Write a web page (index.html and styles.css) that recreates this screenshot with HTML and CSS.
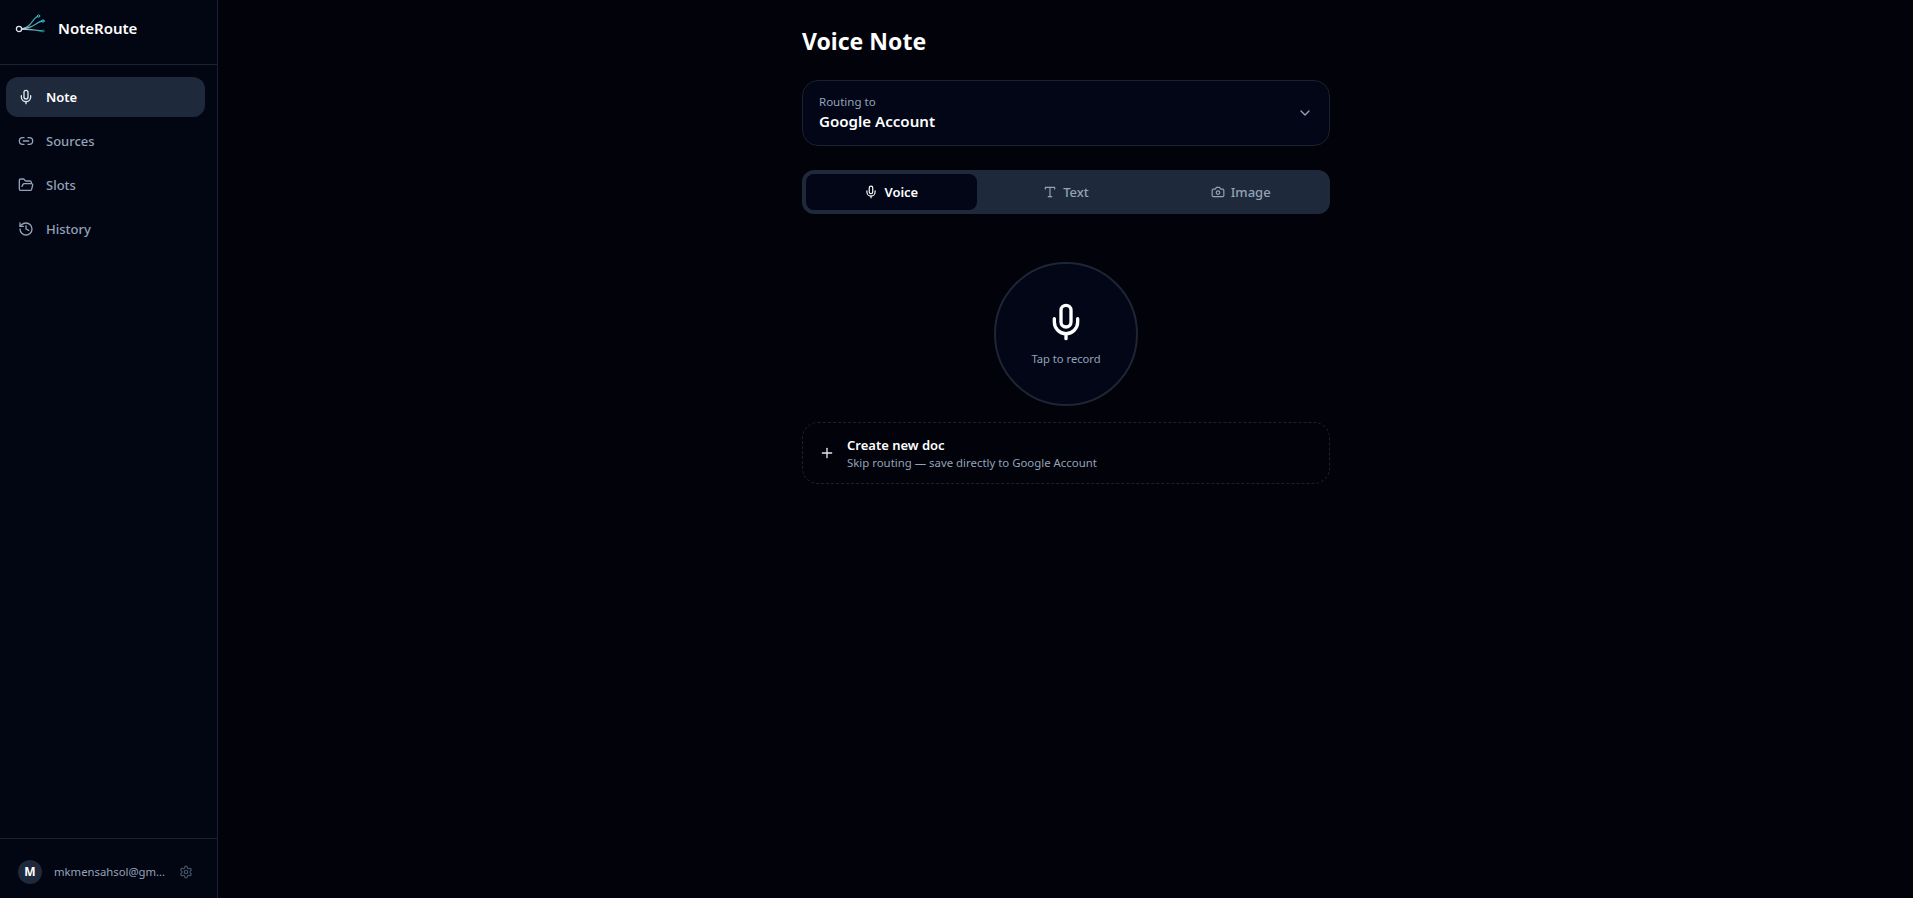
FILE: index.html
```html
<!DOCTYPE html>
<html lang="en">
<head>
<meta charset="utf-8">
<title>NoteRoute</title>
<link rel="stylesheet" href="styles.css">
</head>
<body>
<div class="app">
  <aside class="sidebar">
    <div class="brand">
      <svg class="logo" width="32" height="24" viewBox="0 0 32 24" fill="none">
        <defs>
          <linearGradient id="lg" x1="4" y1="18" x2="28" y2="6" gradientUnits="userSpaceOnUse">
            <stop offset="0" stop-color="#e2e8f0"/>
            <stop offset="0.5" stop-color="#4fa3ab"/>
            <stop offset="1" stop-color="#22c3d6"/>
          </linearGradient>
        </defs>
        <circle cx="4" cy="18" r="2.6" stroke="#e2e8f0" stroke-width="1.3"/>
        <path d="M6.600 18C12 17 15 14 17 11C19 8 20 6.500 22.500 5.500" stroke="url(#lg)" stroke-width="1.300"/>
        <path d="M6.600 18C13 17.500 18 15 21 13C23 11.500 25 10.500 27 10" stroke="url(#lg)" stroke-width="1.300"/>
        <path d="M6.600 18C13 18 20 19 27 20" stroke="url(#lg)" stroke-width="1.300"/>
        <circle class="dot" cx="23.500" cy="5" r="1.200" stroke="#35d0e0"/>
        <circle class="dot" cx="28" cy="10" r="1.200" stroke="#35d0e0"/>
        <circle class="dot" cx="28" cy="20" r="1.100" stroke="#1c7a86"/>
      </svg>
      <span class="brand-name">NoteRoute</span>
    </div>
    <nav class="nav">
      <a class="nav-item active">
        <svg class="ico" viewBox="0 0 24 24"><path d="M12 2a3 3 0 0 0-3 3v7a3 3 0 0 0 6 0V5a3 3 0 0 0-3-3Z"/><path d="M19 10v2a7 7 0 0 1-14 0v-2"/><line x1="12" x2="12" y1="19" y2="22"/></svg>
        <span>Note</span>
      </a>
      <a class="nav-item">
        <svg class="ico" viewBox="0 0 24 24"><path d="M9 17H7A5 5 0 0 1 7 7h2"/><path d="M15 7h2a5 5 0 1 1 0 10h-2"/><line x1="8" x2="16" y1="12" y2="12"/></svg>
        <span>Sources</span>
      </a>
      <a class="nav-item">
        <svg class="ico" viewBox="0 0 24 24"><path d="m6 14 1.500-2.900A2 2 0 0 1 9.240 10H20a2 2 0 0 1 1.940 2.500l-1.540 6a2 2 0 0 1-1.950 1.500H4a2 2 0 0 1-2-2V5a2 2 0 0 1 2-2h3.900a2 2 0 0 1 1.690.900l.810 1.200a2 2 0 0 0 1.670.900H18a2 2 0 0 1 2 2v2"/></svg>
        <span>Slots</span>
      </a>
      <a class="nav-item">
        <svg class="ico" viewBox="0 0 24 24"><path d="M3 12a9 9 0 1 0 9-9 9.750 9.750 0 0 0-6.740 2.740L3 8"/><path d="M3 3v5h5"/><path d="M12 7v5l4 2"/></svg>
        <span>History</span>
      </a>
    </nav>
    <div class="account">
      <div class="avatar">M</div>
      <span class="email">mkmensahsol@gm...</span>
      <svg class="gear" viewBox="0 0 24 24"><path d="M12.220 2h-.440a2 2 0 0 0-2 2v.180a2 2 0 0 1-1 1.730l-.430.250a2 2 0 0 1-2 0l-.150-.080a2 2 0 0 0-2.730.730l-.220.380a2 2 0 0 0 .730 2.730l.150.100a2 2 0 0 1 1 1.720v.510a2 2 0 0 1-1 1.740l-.150.090a2 2 0 0 0-.730 2.730l.220.380a2 2 0 0 0 2.730.730l.150-.080a2 2 0 0 1 2 0l.430.250a2 2 0 0 1 1 1.730V20a2 2 0 0 0 2 2h.440a2 2 0 0 0 2-2v-.180a2 2 0 0 1 1-1.730l.430-.250a2 2 0 0 1 2 0l.150.080a2 2 0 0 0 2.730-.730l.220-.390a2 2 0 0 0-.730-2.730l-.150-.080a2 2 0 0 1-1-1.740v-.500a2 2 0 0 1 1-1.740l.150-.090a2 2 0 0 0 .730-2.730l-.220-.380a2 2 0 0 0-2.730-.730l-.150.080a2 2 0 0 1-2 0l-.430-.250a2 2 0 0 1-1-1.730V4a2 2 0 0 0-2-2z"/><circle cx="12" cy="12" r="3"/></svg>
    </div>
  </aside>
  <main class="main">
    <div class="column">
      <h1 class="title">Voice Note</h1>
      <button class="route">
        <span class="route-text">
          <span class="route-label">Routing to</span>
          <span class="route-value">Google Account</span>
        </span>
        <svg class="chev" viewBox="0 0 24 24"><path d="m6 9 6 6 6-6"/></svg>
      </button>
      <div class="tabs">
        <div class="tab active">
          <svg class="tab-ico" viewBox="0 0 24 24"><path d="M12 2a3 3 0 0 0-3 3v7a3 3 0 0 0 6 0V5a3 3 0 0 0-3-3Z"/><path d="M19 10v2a7 7 0 0 1-14 0v-2"/><line x1="12" x2="12" y1="19" y2="22"/></svg>
          <span>Voice</span>
        </div>
        <div class="tab">
          <svg class="tab-ico" viewBox="0 0 24 24"><polyline points="4 7 4 4 20 4 20 7"/><line x1="9" x2="15" y1="20" y2="20"/><line x1="12" x2="12" y1="4" y2="20"/></svg>
          <span>Text</span>
        </div>
        <div class="tab">
          <svg class="tab-ico" viewBox="0 0 24 24"><path d="M14.500 4h-5L7 7H4a2 2 0 0 0-2 2v9a2 2 0 0 0 2 2h16a2 2 0 0 0 2-2V9a2 2 0 0 0-2-2h-3l-2.500-3z"/><circle cx="12" cy="13" r="3"/></svg>
          <span>Image</span>
        </div>
      </div>
      <div class="record-wrap">
        <button class="record">
          <svg class="record-ico" viewBox="0 0 24 24"><path d="M12 2a3 3 0 0 0-3 3v7a3 3 0 0 0 6 0V5a3 3 0 0 0-3-3Z"/><path d="M19 10v2a7 7 0 0 1-14 0v-2"/><line x1="12" x2="12" y1="19" y2="22"/></svg>
          <span class="record-text">Tap to record</span>
        </button>
      </div>
      <button class="create">
        <svg class="plus" viewBox="0 0 24 24"><path d="M5 12h14"/><path d="M12 5v14"/></svg>
        <span class="create-text">
          <span class="create-title">Create new doc</span>
          <span class="create-sub">Skip routing — save directly to Google Account</span>
        </span>
      </button>
    </div>
  </main>
</div>
</body>
</html>
```
FILE: styles.css
```css
* { box-sizing: border-box; }
html, body { margin: 0; height: 100%; }
body {
  background: #01020a;
  color: #fff;
  font-family: "Noto Sans", "Open Sans", sans-serif;
  overflow: hidden;
}
svg { fill: none; stroke: currentColor; stroke-width: 2; stroke-linecap: round; stroke-linejoin: round; flex: none; }
button { font: inherit; color: inherit; text-align: left; }
.app { display: flex; height: 898px; }
.sidebar {
  width: 218px;
  flex: none;
  display: flex;
  flex-direction: column;
  background: #020512;
  border-right: 1px solid #1a2130;
}
.brand {
  height: 65px;
  display: flex;
  align-items: center;
  gap: 11px;
  padding: 0 16px 9px 15px;
  border-bottom: 1px solid #1a2130;
}
.logo { margin-top: -9px; }
.logo .dot { stroke-width: 0.9; }
.brand-name { font-size: 15px; font-weight: 600; }
.nav { flex: 1; display: flex; flex-direction: column; gap: 4px; padding: 12px 12px 12px 6px; }
.nav-item {
  height: 40px;
  display: flex;
  align-items: center;
  gap: 12px;
  padding: 0 12px;
  border-radius: 12px;
  font-size: 13px;
  font-weight: 500;
  color: #94a3b8;
}
.nav-item .ico { width: 16px; height: 16px; }
.nav-item.active { background: #1e293b; color: #fff; font-weight: 600; }
.nav-item.active .ico { color: #e2e8f0; }
.account {
  height: 60px;
  display: flex;
  align-items: center;
  padding: 6px 18px 0;
  border-top: 1px solid #1a2130;
}
.avatar {
  width: 24px;
  height: 24px;
  border-radius: 50%;
  background: #1e293b;
  display: flex;
  align-items: center;
  justify-content: center;
  font-size: 12px;
  font-weight: 700;
  flex: none;
}
.email { margin-left: 12px; width: 112px; font-size: 11.3px; color: #94a3b8; white-space: nowrap; }
.gear { width: 14px; height: 14px; margin-left: 13px; color: #475569; }
.main { flex: 1; display: flex; justify-content: center; padding-left: 1px; }
.column { width: 528px; padding-top: 25px; display: flex; flex-direction: column; }
.title { margin: 0; font-size: 23px; line-height: 32px; font-weight: 700; }
.route {
  margin-top: 23px;
  height: 66px;
  padding: 0 16px;
  display: flex;
  align-items: center;
  justify-content: space-between;
  background: #020617;
  border: 1px solid #1a2130;
  border-radius: 16px;
}
.route-text { display: flex; flex-direction: column; }
.route-label { font-size: 11.5px; line-height: 14px; margin-bottom: 2px; color: #94a3b8; }
.route-value { font-size: 15.1px; line-height: 20px; font-weight: 600; }
.chev { width: 16px; height: 16px; color: #94a3b8; }
.tabs {
  margin-top: 24px;
  height: 44px;
  padding: 4px;
  display: flex;
  gap: 4px;
  background: #1e293b;
  border-radius: 12px;
}
.tab {
  flex: 1;
  display: flex;
  align-items: center;
  justify-content: center;
  gap: 6px;
  border-radius: 8px;
  font-size: 13px;
  font-weight: 500;
  color: #94a3b8;
}
.tab-ico { width: 14px; height: 14px; }
.tab.active { background: #020617; color: #fff; font-weight: 600; }
.record-wrap { margin-top: 48px; display: flex; justify-content: center; }
.record {
  width: 144px;
  height: 144px;
  border-radius: 50%;
  border: 2px solid #1e2533;
  background: #020617;
  display: flex;
  flex-direction: column;
  align-items: center;
  justify-content: center;
  gap: 9px;
  padding: 0;
}
.record-ico { width: 40px; height: 40px; }
.record-text { font-size: 11.2px; line-height: 16px; color: #94a3b8; }
.create {
  margin-top: 16px;
  height: 62px;
  padding: 0 16px;
  display: flex;
  align-items: center;
  gap: 12px;
  background: transparent;
  border: 1px dashed #1a2230;
  border-radius: 16px;
}
.plus { width: 16px; height: 16px; color: #e2e8f0; }
.create-text { display: flex; flex-direction: column; padding-top: 1px; }
.create-title { font-size: 13px; line-height: 18px; font-weight: 600; }
.create-sub { font-size: 11.4px; line-height: 16px; margin-top: 1px; color: #94a3b8; }
```
